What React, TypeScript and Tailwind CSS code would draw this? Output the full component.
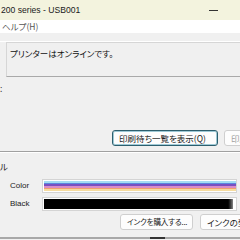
const jp = "font-['Segoe_UI','Noto_Sans_CJK_JP',sans-serif] [font-feature-settings:'palt']";

const InkBar = ({ kind }: { kind: 'color' | 'black' }) => (
  <div className="h-[14px] w-[195px] border border-[#d4d4d4] bg-white p-[1px]">
    {kind === 'color' ? (
      <div className="flex h-full w-[192px] flex-col">
        <div className="h-[2px] bg-[#a6dcf2]" />
        <div className="h-[2px] bg-[#5a86de]" />
        <div className="h-[2px] bg-[#7a4fc0]" />
        <div className="h-[2px] bg-[#d88cc8]" />
        <div className="h-[2px] bg-[#f2a06e]" />
        <div className="h-[2px] bg-[#f6dca0]" />
      </div>
    ) : (
      <div className="h-full w-[189px] bg-gradient-to-r from-black from-[97%] to-[#888]" />
    )}
  </div>
);

const Btn = ({
  children,
  focused,
  disabled,
  className,
}: {
  children: React.ReactNode;
  focused?: boolean;
  disabled?: boolean;
  className?: string;
}) => (
  <div
    className={`flex h-[16px] shrink-0 items-center overflow-hidden whitespace-nowrap rounded-[3px] border bg-[#fdfdfd] px-[6px] leading-none ${
      focused ? 'border-[#2d5f6e] ring-1 ring-inset ring-[#9ec9d6]' : 'border-[#cfcfcf]'
    } ${disabled ? 'text-[#a0a0a0]' : 'text-[#1a1a1a]'} ${className ?? ''}`}>
    {children}
  </div>
);

export default function App() {
  return (
    <div className={`h-[240px] w-[240px] overflow-hidden bg-[#f0f0f0] ${jp}`}>
      <div className="w-[300px]">
        {/* title bar */}
        <div className="flex h-[20px] items-center bg-[#f3f3de]">
          <span className="pl-[1px] font-['Liberation_Sans',sans-serif] text-[8.6px] text-[#1a1a1a]">
            200 series - USB001
          </span>
          <div className="ml-[129px] h-[1px] w-[9px] bg-[#333]" />
        </div>

        {/* menu bar */}
        <div className="flex h-[13px] items-center bg-white pl-[2px] text-[8.5px] text-[#555]">
          ヘルプ(H)
        </div>

        {/* status */}
        <div className="border-b border-white pt-[8px]" />
        <div className="ml-[6px] h-[35px] border border-r-0 border-[#d6d6d6] border-b-[#a9a9a9] bg-[#f0f0f0] pl-[3px] pt-[4px] text-[8.5px] text-[#111]">
          プリンターはオンラインです。
        </div>
        <div className="mt-[7px] h-[9px] text-[8.5px] leading-[9px] text-[#333]">:</div>

        {/* queue buttons */}
        <div className="mt-[37px] flex gap-[6px] pl-[112px]">
          <Btn focused className="w-[106px] text-[8.5px]">印刷待ち一覧を表示(Q)</Btn>
          <Btn disabled className="w-[80px] text-[8.5px]">印刷待ち</Btn>
        </div>

        <div className="mt-[5px] border-t border-[#a0a0a0] border-b border-b-white" />

        {/* ink section */}
        <div className="mt-[8px] h-[10px] text-[8.5px] leading-[10px] text-[#222]">ル</div>
        <div className="mt-[8px] flex items-center">
          <span className="w-[42px] pl-[10px] font-['Liberation_Sans',sans-serif] text-[8px] text-[#222]">Color</span>
          <InkBar kind="color" />
        </div>
        <div className="mt-[4px] flex items-center">
          <span className="w-[42px] pl-[10px] font-['Liberation_Sans',sans-serif] text-[8px] text-[#222]">Black</span>
          <InkBar kind="black" />
        </div>
        <div className="mt-[3px] flex gap-[7px] pl-[120px]">
          <Btn className="w-[73px] px-[4px] text-[7.6px] tracking-[-0.2px]">インクを購入する...</Btn>
          <Btn className="w-[80px] text-[8.5px]">インクの型番</Btn>
        </div>

        <div className="relative mt-[7px] h-[2px] bg-[#a8a8a8]">
          <div className="absolute left-[150px] top-0 h-[2px] w-[15px] bg-[#333]" />
        </div>
      </div>
    </div>
  );
}
